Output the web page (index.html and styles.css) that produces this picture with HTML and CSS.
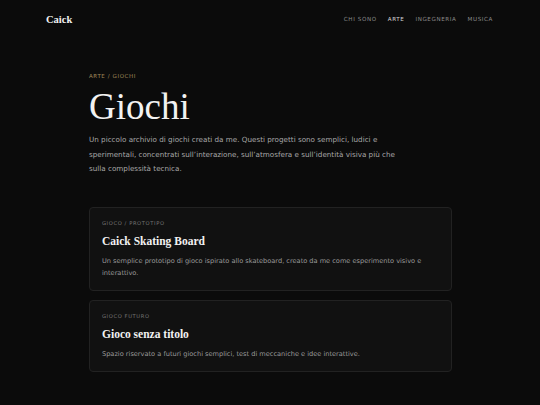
FILE: index.html
```html
<!DOCTYPE html>
<html lang="it">
<head>
<meta charset="utf-8">
<title>Giochi - Caick</title>
<link rel="stylesheet" href="styles.css">
</head>
<body>
<header class="site-header">
  <a class="logo" href="#">Caick</a>
  <nav class="nav">
    <a href="#">Chi sono</a>
    <a href="#" class="active">Arte</a>
    <a href="#">Ingegneria</a>
    <a href="#">Musica</a>
  </nav>
</header>
<main class="content">
  <p class="crumb">Arte / Giochi</p>
  <h1 class="title">Giochi</h1>
  <p class="intro">Un piccolo archivio di giochi creati da me. Questi progetti sono semplici, ludici e sperimentali, concentrati sull’interazione, sull’atmosfera e sull’identità visiva più che sulla complessità tecnica.</p>
  <section class="cards">
    <article class="card">
      <p class="card-label">Gioco / Prototipo</p>
      <h2 class="card-title">Caick Skating Board</h2>
      <p class="card-text">Un semplice prototipo di gioco ispirato allo skateboard, creato da me come esperimento visivo e interattivo.</p>
    </article>
    <article class="card">
      <p class="card-label">Gioco futuro</p>
      <h2 class="card-title">Gioco senza titolo</h2>
      <p class="card-text">Spazio riservato a futuri giochi semplici, test di meccaniche e idee interattive.</p>
    </article>
  </section>
</main>
</body>
</html>
```
FILE: styles.css
```css
html, body {
  margin: 0;
  padding: 0;
  background: #0b0b0b;
  color: #e8e8e8;
  font-family: "DejaVu Sans", "Open Sans", sans-serif;
}
a { text-decoration: none; color: inherit; }
p, h1, h2 { margin: 0; }

.site-header {
  display: flex;
  justify-content: space-between;
  align-items: center;
  height: 38px;
  padding: 0 47px 0 46px;
}
.logo {
  font-family: "Liberation Serif", serif;
  font-weight: bold;
  font-size: 10.5px;
  color: #f2f2f2;
}
.nav {
  display: flex;
  gap: 11px;
}
.nav a {
  font-size: 5.6px;
  letter-spacing: 0.6px;
  text-transform: uppercase;
  color: #8a8a8a;
}
.nav a.active { color: #d6d6d6; }

.content {
  width: 363px;
  margin: 35px 0 0 89px;
}
.crumb {
  font-size: 5.5px;
  letter-spacing: 0.6px;
  text-transform: uppercase;
  color: #a08a5a;
}
.title {
  font-family: "Liberation Serif", serif;
  font-weight: normal;
  font-size: 37px;
  line-height: 42px;
  margin-top: 7px;
  color: #f2f2f2;
}
.intro {
  margin-top: 5px;
  font-size: 7.2px;
  line-height: 14.5px;
  color: #a8a8a8;
  width: 315px;
}
.cards {
  margin-top: 30px;
  display: flex;
  flex-direction: column;
  gap: 9px;
}
.card {
  background: #111111;
  border: 1px solid #222222;
  border-radius: 4px;
  padding: 12px 12px 11px 12px;
}
.card-label {
  font-size: 5.2px;
  letter-spacing: 0.6px;
  text-transform: uppercase;
  color: #777;
}
.card-title {
  font-family: "Liberation Serif", serif;
  font-weight: bold;
  font-size: 11.5px;
  margin-top: 9px;
  color: #f2f2f2;
}
.card-text {
  margin-top: 8px;
  font-size: 6.6px;
  line-height: 12px;
  color: #9a9a9a;
}
```
